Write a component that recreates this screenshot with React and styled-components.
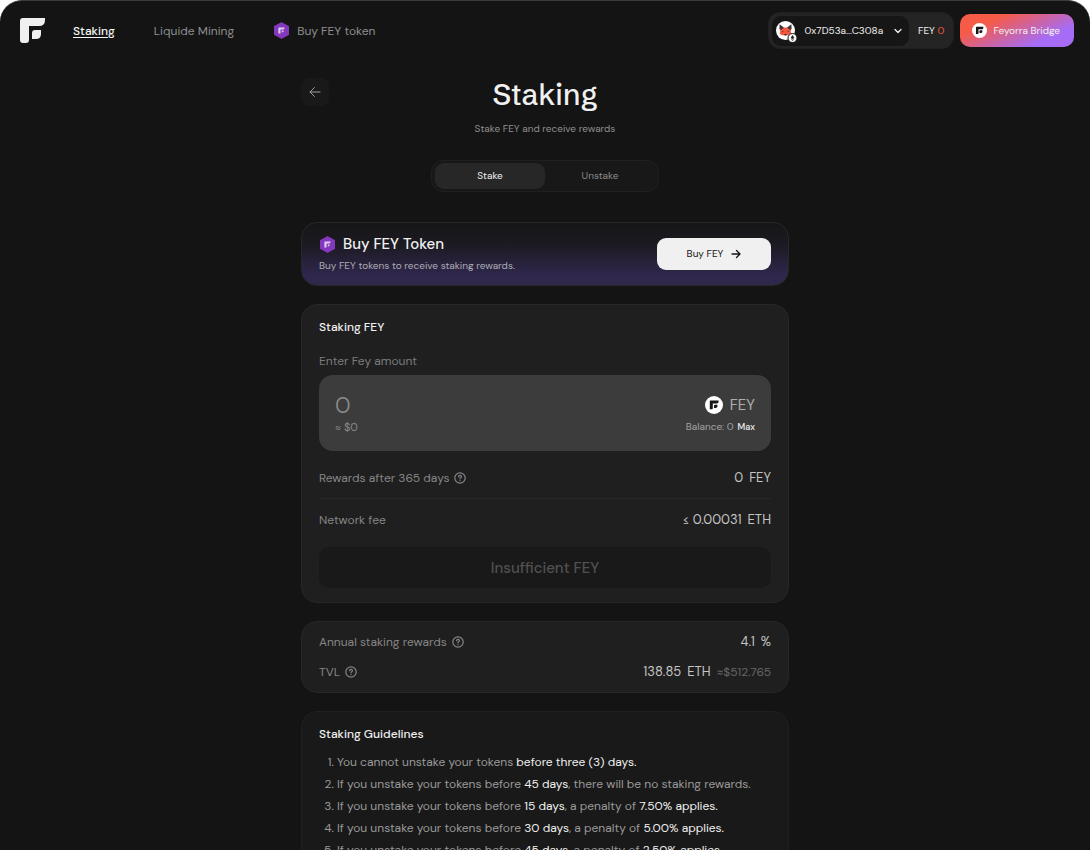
import { useId, useState } from "react";
import styled, { createGlobalStyle, css } from "styled-components";

const GlobalStyle = createGlobalStyle`
  * {
    box-sizing: border-box;
  }

  html {
    scrollbar-width: none;
  }

  body {
    margin: 0;
    background: #ffffff;
    color: #f0f0f0;
    font-family: "DM Sans", Inter, "Liberation Sans", sans-serif;
    font-size: 12px;
    line-height: 16px;
  }

  button,
  input {
    font: inherit;
    color: inherit;
    border: 0;
    padding: 0;
    background: none;
  }

  button {
    cursor: pointer;
  }

  a {
    color: inherit;
    text-decoration: none;
  }
`;

const Shell = styled.div`
  min-height: 100vh;
  background: #141414;
  border-top: 1px solid #3a3c3c;
  border-radius: 22px 22px 0 0;
`;

// Header

const Header = styled.header`
  display: flex;
  align-items: center;
  justify-content: space-between;
  padding: 11px 16px 0 20px;
`;

const Nav = styled.nav`
  display: flex;
  align-items: center;
`;

const Logo = styled.a`
  display: flex;
  margin-right: 28px;
`;

const NavLink = styled.a`
  display: flex;
  align-items: center;
  gap: 7px;
  margin-right: 39px;
  color: #8f8f8f;

  ${({ $active }) =>
    $active &&
    css`
      color: #f5f5f5;
      font-weight: 500;
      text-decoration: underline;
      text-underline-offset: 2px;
    `}
`;

const Account = styled.div`
  display: flex;
  align-items: center;
  gap: 6px;
  font-size: 10px;
`;

const Wallet = styled.div`
  display: flex;
  align-items: center;
  height: 37px;
  padding: 3px;
  border: 1px solid #202020;
  border-radius: 12px;
  background: #242424;
`;

const AddressButton = styled.button`
  display: flex;
  align-items: center;
  height: 30px;
  padding: 0 6px 0 3px;
  border-radius: 9px;
  background: #161616;

  span {
    margin: 0 10px 0 6px;
  }
`;

const WalletBalance = styled.span`
  padding: 0 6px 0 9px;

  b {
    color: #f2583e;
    font-weight: 400;
  }
`;

const BridgeButton = styled.button`
  display: flex;
  align-items: center;
  gap: 6px;
  height: 33px;
  padding: 0 14px 0 12px;
  border-radius: 10px;
  background: linear-gradient(155deg, #f65b48 25%, #a66cf5 75%);
`;

// Page heading

const Main = styled.main`
  width: 100%;
  max-width: 488px;
  margin: 0 auto;
  padding: 25px 0 18px;
`;

const Heading = styled.div`
  display: grid;
  grid-template-columns: 28px 1fr 28px;
  align-items: center;
`;

const BackButton = styled.button`
  display: flex;
  align-items: center;
  justify-content: center;
  width: 28px;
  height: 28px;
  border-radius: 8px;
  background: #191919;
  color: #a0a0a0;
`;

const Title = styled.h1`
  margin: 0;
  padding-top: 6px;
  font-family: "Schibsted Grotesk", "DM Sans", sans-serif;
  font-size: 30px;
  font-weight: 500;
  line-height: 30px;
  text-align: center;
`;

const Subtitle = styled.p`
  margin: 11px 0 23px;
  color: #8f8f8f;
  font-size: 10px;
  text-align: center;
`;

const Tabs = styled.div`
  display: grid;
  grid-template-columns: 1fr 1fr;
  width: 228px;
  margin: 0 auto 30px;
  padding: 2px 3px;
  border: 1px solid #202020;
  border-radius: 12px;
  background: #181818;
`;

const Tab = styled.button`
  height: 26px;
  border-radius: 9px;
  background: ${({ $active }) => ($active ? "#272727" : "transparent")};
  color: ${({ $active }) => ($active ? "#f0f0f0" : "#8a8a8a")};
  font-size: 10px;
`;

// Cards

const Card = styled.section`
  margin-bottom: 18px;
  padding: ${({ $pad }) => $pad || "14px 17px"};
  border: 1px solid ${({ $dim }) => ($dim ? "#202020" : "#272727")};
  border-radius: 16px;
  background: ${({ $dim }) => ($dim ? "#191919" : "#1f1f1f")};
`;

const BuyCard = styled(Card)`
  display: flex;
  align-items: center;
  justify-content: space-between;
  background: linear-gradient(#161616 0%, #1c1a22 35%, #30274d 85%);
`;

const BuyTitle = styled.h2`
  display: flex;
  align-items: center;
  gap: 7px;
  margin: 0 0 6px;
  font-size: 15px;
  font-weight: 500;
  line-height: 18px;
`;

const BuyText = styled.p`
  margin: 0;
  color: #acacb2;
  font-size: 10px;
  line-height: 14px;
`;

const BuyButton = styled.button`
  display: flex;
  align-items: center;
  justify-content: center;
  gap: 8px;
  width: 114px;
  height: 32px;
  border-radius: 9px;
  background: #f0f0f0;
  color: #141414;
  font-size: 10px;
`;

const CardTitle = styled.h2`
  margin: 0;
  font-size: 12px;
  font-weight: 500;
  line-height: 16px;
`;

const FieldLabel = styled.label`
  display: block;
  margin: 18px 0 6px;
  color: #7c7c7c;
`;

const AmountBox = styled.div`
  display: flex;
  justify-content: space-between;
  margin-bottom: 6px;
  padding: 16px;
  border-radius: 14px;
  background: #3c3c3c;
`;

const AmountColumn = styled.div`
  flex: ${({ $grow }) => ($grow ? 1 : "none")};
  min-width: 0;
  color: #8a8a8a;
  font-size: 11px;
`;

const AmountInput = styled.input`
  display: block;
  width: 100%;
  height: 28px;
  outline: none;
  color: #8a8a8a;
  font-size: 23px;
  font-weight: 300;
  line-height: 28px;
`;

const TokenName = styled.div`
  display: flex;
  align-items: center;
  justify-content: flex-end;
  gap: 7px;
  height: 28px;
  color: #adadad;
  font-size: 15px;
`;

const Balance = styled.div`
  display: flex;
  align-items: center;
  gap: 4px;
  color: #a3a3a3;
  font-size: 10px;
`;

const MaxButton = styled.button`
  color: #f0f0f0;
  font-size: 9px;
  font-weight: 500;
`;

const Row = styled.div`
  display: flex;
  align-items: center;
  justify-content: space-between;
  height: ${({ $tall }) => ($tall ? 42 : 30)}px;
  border-bottom: ${({ $line }) => ($line ? "1px solid #272727" : "0")};
`;

const RowLabel = styled.span`
  display: flex;
  align-items: center;
  gap: 5px;
  color: #868686;
`;

const RowValue = styled.span`
  display: flex;
  align-items: baseline;
  gap: 6px;
  color: #c4c4c4;
  font-size: 13px;

  small {
    color: #666666;
    font-size: 12px;
  }
`;

const HelpButton = styled.button`
  display: flex;
`;

const SubmitButton = styled.button`
  width: 100%;
  height: 41px;
  margin-top: 6px;
  border-radius: 10px;
  background: #191919;
  color: #505050;
  font-size: 15px;
  font-weight: 500;
`;

const Guidelines = styled.ol`
  margin: 9px 0 0;
  padding-left: 18px;
  color: #999999;
  line-height: 22px;

  strong {
    color: #f0f0f0;
    font-weight: 400;
  }
`;

// Icons

function FeyMark({ size, color }) {
  return (
    <svg width={size} height={size} viewBox="0 0 25 25" fill={color} aria-hidden="true">
      <path d="M3 0H25V2Q25 8 19 8H9V22Q9 25 6 25H3Q0 25 0 22V3Q0 0 3 0Z" />
      <path d="M15 12H21V16Q21 21 16 21H12V15Q12 12 15 12Z" />
    </svg>
  );
}

function FeyCoin({ size }) {
  return (
    <svg width={size} height={size} viewBox="0 0 18 18" aria-hidden="true">
      <circle cx="9" cy="9" r="9" fill="#fff" />
      <path d="M5.4 4.6H13.6V5.6Q13.6 7.5 11.7 7.5H7.8V12.2Q7.8 13.2 6.8 13.2H4.8V5.2Q4.8 4.6 5.4 4.6Z" fill="#171717" />
      <path d="M10 8.8H12.4V10.2Q12.4 12 10.6 12H9V9.8Q9 8.8 10 8.8Z" fill="#171717" />
    </svg>
  );
}

function FeyHex() {
  return (
    <svg width="17" height="17" viewBox="0 0 17 17" aria-hidden="true">
      <path d="M8.5 .8L15.4 4.6V12.4L8.5 16.2L1.6 12.4V4.6Z" fill="#8438bd" stroke="#8438bd" strokeWidth="1.2" strokeLinejoin="round" />
      <path d="M5.9 5.4H11.7Q11.7 7.4 10 7.4H7.5V11.4H5.4V5.9Q5.4 5.4 5.9 5.4Z" fill="#dfcdf0" />
      <path d="M8.8 8.6H10.8Q10.8 10.6 8.8 10.6Z" fill="#dfcdf0" />
    </svg>
  );
}

function WalletAvatar() {
  return (
    <svg width="24" height="24" viewBox="0 0 24 24" aria-hidden="true">
      <circle cx="10.5" cy="11.5" r="9.5" fill="#fff" />
      <path d="M5.5 7L9 8.6H12L15.5 7L16.3 10.5L15.8 12.5L16.2 15L13.8 16.2H7.2L4.8 15L5.2 12.5L4.7 10.5Z" fill="#f2583e" />
      <path d="M4.6 5.2L8.8 8.6L6.4 10.8L4.4 10ZM16.4 5.2L12.2 8.6L14.6 10.8L16.6 10Z" fill="#3d3338" />
      <path d="M7 11.8L9.2 12.8H7.2ZM14 11.8L11.8 12.8H13.8ZM9.2 15H11.8L11.4 16.4H9.6Z" fill="#3d3338" />
      <circle cx="17.5" cy="19" r="4.5" fill="#fff" stroke="#161616" />
      <path d="M17.5 16L19.4 19L17.5 20L15.6 19ZM15.8 19.8L17.5 20.7L19.2 19.8L17.5 22Z" fill="#222" />
    </svg>
  );
}

function Stroke({ size, width = 1, children }) {
  return (
    <svg width={size} height={size} viewBox={`0 0 ${size} ${size}`} fill="none" stroke="currentColor" strokeWidth={width} strokeLinecap="round" strokeLinejoin="round" aria-hidden="true">
      {children}
    </svg>
  );
}

function Help({ label }) {
  return (
    <HelpButton type="button" aria-label={label}>
      <Stroke size={12} width={1.2}>
        <circle cx="6" cy="6" r="5.2" />
        <path d="M4.6 4.8C4.6 3 7.4 3 7.4 4.8C7.4 5.8 6 5.8 6 6.8M6 8.6V8.7" />
      </Stroke>
    </HelpButton>
  );
}

const tabs = ["Stake", "Unstake"];

const penalties = [
  { days: 15, penalty: "7.50%" },
  { days: 30, penalty: "5.00%" },
  { days: 45, penalty: "2.50%" },
];

function TopBar() {
  return (
    <Header>
      <Nav>
        <Logo href="#" aria-label="Feyorra">
          <FeyMark size={25} color="#f0f0f0" />
        </Logo>
        <NavLink href="#staking" $active>Staking</NavLink>
        <NavLink href="#mining">Liquide Mining</NavLink>
        <NavLink href="#buy">
          <FeyHex />
          Buy FEY token
        </NavLink>
      </Nav>
      <Account>
        <Wallet>
          <AddressButton type="button">
            <WalletAvatar />
            <span>0x7D53a...C308a</span>
            <Stroke size={10} width={1.3}>
              <path d="M2 3.5L5 6.5L8 3.5" />
            </Stroke>
          </AddressButton>
          <WalletBalance>
            FEY <b>0</b>
          </WalletBalance>
        </Wallet>
        <BridgeButton type="button">
          <FeyCoin size={15} />
          Feyorra Bridge
        </BridgeButton>
      </Account>
    </Header>
  );
}

function StakeCard() {
  const id = useId();
  const [amount, setAmount] = useState("0");
  return (
    <Card>
      <CardTitle>Staking FEY</CardTitle>
      <FieldLabel htmlFor={id}>Enter Fey amount</FieldLabel>
      <AmountBox>
        <AmountColumn $grow>
          <AmountInput id={id} inputMode="decimal" value={amount} onChange={(e) => setAmount(e.target.value)} />
          ≈ $0
        </AmountColumn>
        <AmountColumn>
          <TokenName>
            <FeyCoin size={18} />
            FEY
          </TokenName>
          <Balance>
            Balance: 0 <MaxButton type="button">Max</MaxButton>
          </Balance>
        </AmountColumn>
      </AmountBox>
      <Row $tall $line>
        <RowLabel>
          Rewards after 365 days <Help label="About rewards" />
        </RowLabel>
        <RowValue>
          <span>0</span> <span>FEY</span>
        </RowValue>
      </Row>
      <Row $tall>
        <RowLabel>Network fee</RowLabel>
        <RowValue>
          <span>≤ 0.00031</span> <span>ETH</span>
        </RowValue>
      </Row>
      <SubmitButton type="button" disabled>Insufficient FEY</SubmitButton>
    </Card>
  );
}

function App() {
  const [tab, setTab] = useState(tabs[0]);

  return (
    <>
      <GlobalStyle />
      <Shell>
        <TopBar />
        <Main>
          <Heading>
            <BackButton type="button" aria-label="Back">
              <Stroke size={12}>
                <path d="M11 6H1M5.5 1.5L1 6L5.5 10.5" />
              </Stroke>
            </BackButton>
            <Title>Staking</Title>
          </Heading>
          <Subtitle>Stake FEY and receive rewards</Subtitle>
          <Tabs>
            {tabs.map((name) => (
              <Tab key={name} type="button" $active={tab === name} onClick={() => setTab(name)}>
                {name}
              </Tab>
            ))}
          </Tabs>

          <BuyCard $pad="12px 17px">
            <div>
              <BuyTitle>
                <FeyHex />
                Buy FEY Token
              </BuyTitle>
              <BuyText>Buy FEY tokens to receive staking rewards.</BuyText>
            </div>
            <BuyButton type="button">
              Buy FEY
              <Stroke size={10} width={1.3}>
                <path d="M1 5H9M5.5 1.5L9 5L5.5 8.5" />
              </Stroke>
            </BuyButton>
          </BuyCard>

          <StakeCard />

          <Card $pad="5px 17px">
            <Row>
              <RowLabel>
                Annual staking rewards <Help label="About annual rewards" />
              </RowLabel>
              <RowValue>
                <span>4.1</span> <span>%</span>
              </RowValue>
            </Row>
            <Row>
              <RowLabel>
                TVL <Help label="About TVL" />
              </RowLabel>
              <RowValue>
                <span>138.85</span> <span>ETH</span> <small>≈$512.765</small>
              </RowValue>
            </Row>
          </Card>

          <Card $dim>
            <CardTitle>Staking Guidelines</CardTitle>
            <Guidelines>
              <li>
                You cannot unstake your tokens <strong>before three (3) days.</strong>
              </li>
              <li>
                If you unstake your tokens before <strong>45 days</strong>, there will be no staking rewards.
              </li>
              {penalties.map(({ days, penalty }) => (
                <li key={days}>
                  If you unstake your tokens before <strong>{days} days</strong>, a penalty of{" "}
                  <strong>{penalty} applies.</strong>
                </li>
              ))}
            </Guidelines>
          </Card>
        </Main>
      </Shell>
    </>
  );
}

export default App;
